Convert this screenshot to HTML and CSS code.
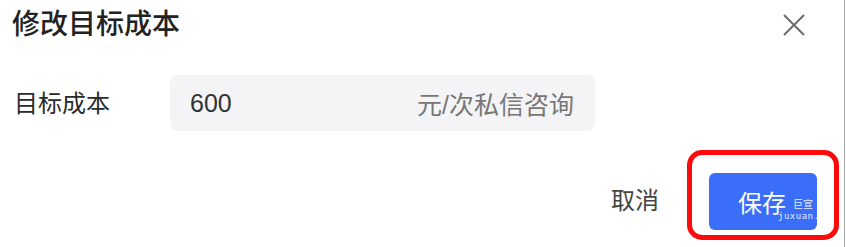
FILE: index.html
```html
<!DOCTYPE html>
<html lang="zh">
<head>
<meta charset="utf-8">
<link rel="stylesheet" href="styles.css">
</head>
<body>
<div class="dialog">
  <div class="header">
    <div class="title">修改目标成本</div>
    <svg class="close" width="22" height="22" viewBox="0 0 22 22"><path d="M1 1L21 21M21 1L1 21" stroke="#6b6b6b" stroke-width="2" fill="none"/></svg>
  </div>
  <div class="form-row">
    <div class="label">目标成本</div>
    <div class="input">
      <span class="value">600</span>
      <span class="suffix">元/次私信咨询</span>
    </div>
  </div>
  <div class="footer">
    <div class="cancel">取消</div>
    <div class="highlight">
      <div class="save">保存
        <span class="wm wm-cn">巨宣</span>
        <span class="wm wm-en">juxuan.n</span>
      </div>
    </div>
  </div>
</div>
</body>
</html>
```

FILE: styles.css
```css
* { box-sizing: border-box; }
html, body { margin: 0; padding: 0; background: #fff; }
body {
  font-family: "Liberation Sans", "Noto Sans CJK SC", sans-serif;
  color: #222;
}
.dialog {
  width: 845px;
  height: 247px;
  border-right: 1px solid #a8a8a8;
  display: flex;
  flex-direction: column;
}
.header {
  display: flex;
  justify-content: space-between;
  align-items: center;
  padding: 11px 39px 0 12px;
}
.title {
  font-size: 28px;
  line-height: 28px;
  font-weight: 500;
  color: #222;
}
.close { display: block; }
.form-row {
  display: flex;
  align-items: center;
  margin-top: 36px;
  padding-left: 14px;
}
.label {
  width: 156px;
  font-size: 24px;
  line-height: 24px;
  color: #2a2a2a;
  padding-top: 2px;
}
.input {
  width: 425px;
  height: 56px;
  border-radius: 8px;
  background: #f4f4f6;
  display: flex;
  justify-content: space-between;
  align-items: center;
  padding: 0 21px 0 20px;
  font-size: 25px;
}
.value { color: #333; }
.suffix { color: #777; }
.footer {
  display: flex;
  justify-content: flex-end;
  align-items: center;
  margin-top: 19px;
  padding-right: 5px;
}
.cancel {
  font-size: 24px;
  line-height: 24px;
  color: #444;
  margin-right: 28px;
  margin-top: 12px;
}
.highlight {
  border: 5px solid #ff0a0a;
  border-radius: 15px;
  padding: 18px 17px 5px 17px;
}
.save {
  position: relative;
  overflow: hidden;
  width: 108px;
  height: 57px;
  border-radius: 6px;
  background: #3a6ef8;
  color: #fff;
  font-size: 24px;
  display: flex;
  align-items: center;
  padding-left: 29px;
}
.wm {
  position: absolute;
  color: rgba(255,255,255,0.9);
  font-size: 10px;
  line-height: 10px;
}
.wm-cn { left: 84px; top: 27px; }
.wm-en { left: 69px; top: 38px; letter-spacing: 0.5px; font-family: "DejaVu Sans Mono", monospace; font-size: 9px; }
```
